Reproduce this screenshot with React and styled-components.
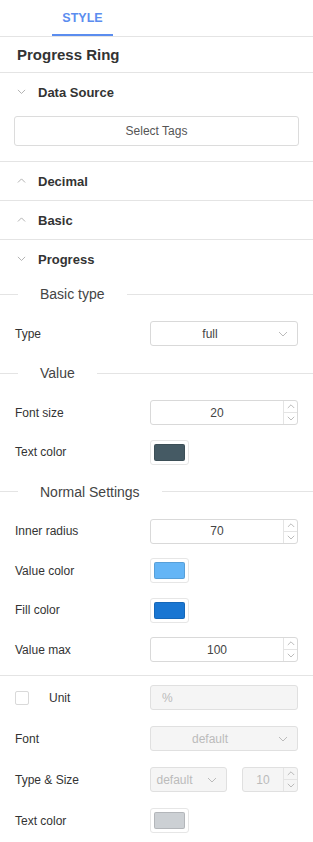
import React from 'react';
import styled, { createGlobalStyle } from 'styled-components';

const GlobalStyle = createGlobalStyle`
  html, body {
    margin: 0;
    padding: 0;
    background: #fff;
  }
  body {
    font-family: "Liberation Sans", Arial, sans-serif;
    color: #333;
  }
  * {
    box-sizing: border-box;
  }
`;

const Panel = styled.div`
  width: 313px;
  height: 842px;
  overflow: hidden;
  background: #fff;
  display: flex;
  flex-direction: column;
`;

const TabBar = styled.div`
  height: 37px;
  border-bottom: 1px solid #e4e4e4;
  display: flex;
  padding-left: 52px;
`;

const Tab = styled.div`
  width: 61px;
  display: flex;
  align-items: center;
  justify-content: center;
  font-size: 12.5px;
  font-weight: 700;
  color: #5b8def;
  border-bottom: 2px solid #5b8def;
  padding-top: 1px;
`;

const Title = styled.div`
  height: 36px;
  display: flex;
  align-items: center;
  padding-left: 17px;
  font-size: 15px;
  font-weight: 700;
  color: #333;
  border-bottom: 1px solid #e4e4e4;
`;

const Section = styled.div`
  border-bottom: ${(p) => (p.$last ? 'none' : '1px solid #e4e4e4')};
`;

const SectionHead = styled.div`
  height: 38px;
  display: flex;
  align-items: center;
  padding-left: 17px;
  gap: 12px;
  font-size: 13px;
  font-weight: 700;
  color: #333;
`;

const SourceBody = styled.div`
  padding: 5px 14px 15px;
`;

const TagButton = styled.div`
  height: 30px;
  border: 1px solid #dcdcdc;
  border-radius: 3px;
  display: flex;
  align-items: center;
  justify-content: center;
  font-size: 12px;
  color: #555;
`;

const Body = styled.div`
  display: flex;
  flex-direction: column;
  gap: ${(p) => p.$gap}px;
  padding: ${(p) => p.$pad};
`;

const Divider = styled.div`
  height: 32px;
  display: flex;
  align-items: center;
  font-size: 14px;
  color: #444;
  &::before,
  &::after {
    content: '';
    height: 1px;
    background: #e4e4e4;
  }
  &::before {
    width: 18px;
  }
  &::after {
    flex: 1;
  }
  span {
    padding: 0 22px;
  }
`;

const Row = styled.div`
  height: 32px;
  display: flex;
  align-items: center;
  padding-left: 15px;
  padding-right: 15px;
`;

const Label = styled.div`
  width: 135px;
  font-size: 12px;
  color: #333;
  display: flex;
  align-items: center;
  gap: 20px;
`;

const Check = styled.span`
  width: 14px;
  height: 14px;
  border: 1px solid #d9d9d9;
  border-radius: 2px;
  background: #fff;
`;

const Field = styled.div`
  width: ${(p) => p.$w || 148}px;
  height: 25px;
  border: 1px solid ${(p) => (p.$disabled ? '#e0e0e0' : '#d9d9d9')};
  border-radius: 3px;
  background: ${(p) => (p.$disabled ? '#f5f5f5' : '#fff')};
  color: ${(p) => (p.$disabled ? '#bbb' : '#444')};
  font-size: 12px;
  display: flex;
  align-items: center;
  margin-left: ${(p) => p.$ml || 0}px;
`;

const FieldText = styled.div`
  flex: 1;
  text-align: ${(p) => p.$align || 'center'};
  padding-left: ${(p) => (p.$align === 'left' ? '11px' : '0')};
`;

const Caret = styled.div`
  width: 28px;
  display: flex;
  align-items: center;
  justify-content: center;
`;

const Spin = styled.div`
  width: 14px;
  align-self: stretch;
  border-left: 1px solid #e4e4e4;
  display: flex;
  flex-direction: column;
  div {
    flex: 1;
    display: flex;
    align-items: center;
    justify-content: center;
  }
  div + div {
    border-top: 1px solid #e4e4e4;
  }
`;

const Swatch = styled.div`
  width: 39px;
  height: 25px;
  padding: 3px;
  border: 1px solid #e6e6e6;
  border-radius: 3px;
  background: #fff;
  span {
    display: block;
    width: 100%;
    height: 100%;
    border-radius: 2px;
    border: 1px solid rgba(0, 0, 0, 0.12);
    background: ${(p) => p.$color};
  }
`;

const ChevronDown = ({ size = 9, color = '#aaa' }) => (
  <svg width={size} height={size * 0.6} viewBox="0 0 10 6" fill="none">
    <polyline points="1,1 5,5 9,1" stroke={color} strokeWidth="1" />
  </svg>
);

const ChevronUp = ({ size = 9, color = '#aaa' }) => (
  <svg width={size} height={size * 0.6} viewBox="0 0 10 6" fill="none">
    <polyline points="1,5 5,1 9,5" stroke={color} strokeWidth="1" />
  </svg>
);

function Select({ value, w, ml, disabled }) {
  return (
    <Field $w={w} $ml={ml} $disabled={disabled}>
      <FieldText>{value}</FieldText>
      <Caret>
        <ChevronDown size={10} color="#bbb" />
      </Caret>
    </Field>
  );
}

function NumberInput({ value, w, ml, disabled }) {
  return (
    <Field $w={w} $ml={ml} $disabled={disabled}>
      <FieldText>{value}</FieldText>
      <Spin>
        <div>
          <ChevronUp size={8} />
        </div>
        <div>
          <ChevronDown size={8} />
        </div>
      </Spin>
    </Field>
  );
}

export default function App() {
  return (
    <Panel>
      <GlobalStyle />
      <TabBar>
        <Tab>STYLE</Tab>
      </TabBar>
      <Title>Progress Ring</Title>

      <Section>
        <SectionHead>
          <ChevronDown />
          Data Source
        </SectionHead>
        <SourceBody>
          <TagButton>Select Tags</TagButton>
        </SourceBody>
      </Section>

      <Section>
        <SectionHead>
          <ChevronUp />
          Decimal
        </SectionHead>
      </Section>

      <Section>
        <SectionHead>
          <ChevronUp />
          Basic
        </SectionHead>
      </Section>

      <Section>
        <SectionHead>
          <ChevronDown />
          Progress
        </SectionHead>
        <Body $gap={7.5} $pad="0 0 9px">
          <Divider>
            <span>Basic type</span>
          </Divider>
          <Row>
            <Label>Type</Label>
            <Select value="full" />
          </Row>
          <Divider>
            <span>Value</span>
          </Divider>
          <Row>
            <Label>Font size</Label>
            <NumberInput value="20" />
          </Row>
          <Row>
            <Label>Text color</Label>
            <Swatch $color="#455a64">
              <span />
            </Swatch>
          </Row>
          <Divider>
            <span>Normal Settings</span>
          </Divider>
          <Row>
            <Label>Inner radius</Label>
            <NumberInput value="70" />
          </Row>
          <Row>
            <Label>Value color</Label>
            <Swatch $color="#64b5f6">
              <span />
            </Swatch>
          </Row>
          <Row>
            <Label>Fill color</Label>
            <Swatch $color="#1976d2">
              <span />
            </Swatch>
          </Row>
          <Row>
            <Label>Value max</Label>
            <NumberInput value="100" />
          </Row>
        </Body>
      </Section>

      <Section $last>
        <Body $gap={9} $pad="6px 0 0">
          <Row>
            <Label>
              <Check />
              Unit
            </Label>
            <Field $disabled>
              <FieldText $align="left">%</FieldText>
            </Field>
          </Row>
          <Row>
            <Label>Font</Label>
            <Select value="default" disabled />
          </Row>
          <Row>
            <Label>Type &amp; Size</Label>
            <Select value="default" w={77} disabled />
            <NumberInput value="10" w={56} ml={15} disabled />
          </Row>
          <Row>
            <Label>Text color</Label>
            <Swatch $color="#ccd0d4">
              <span />
            </Swatch>
          </Row>
        </Body>
      </Section>
    </Panel>
  );
}
